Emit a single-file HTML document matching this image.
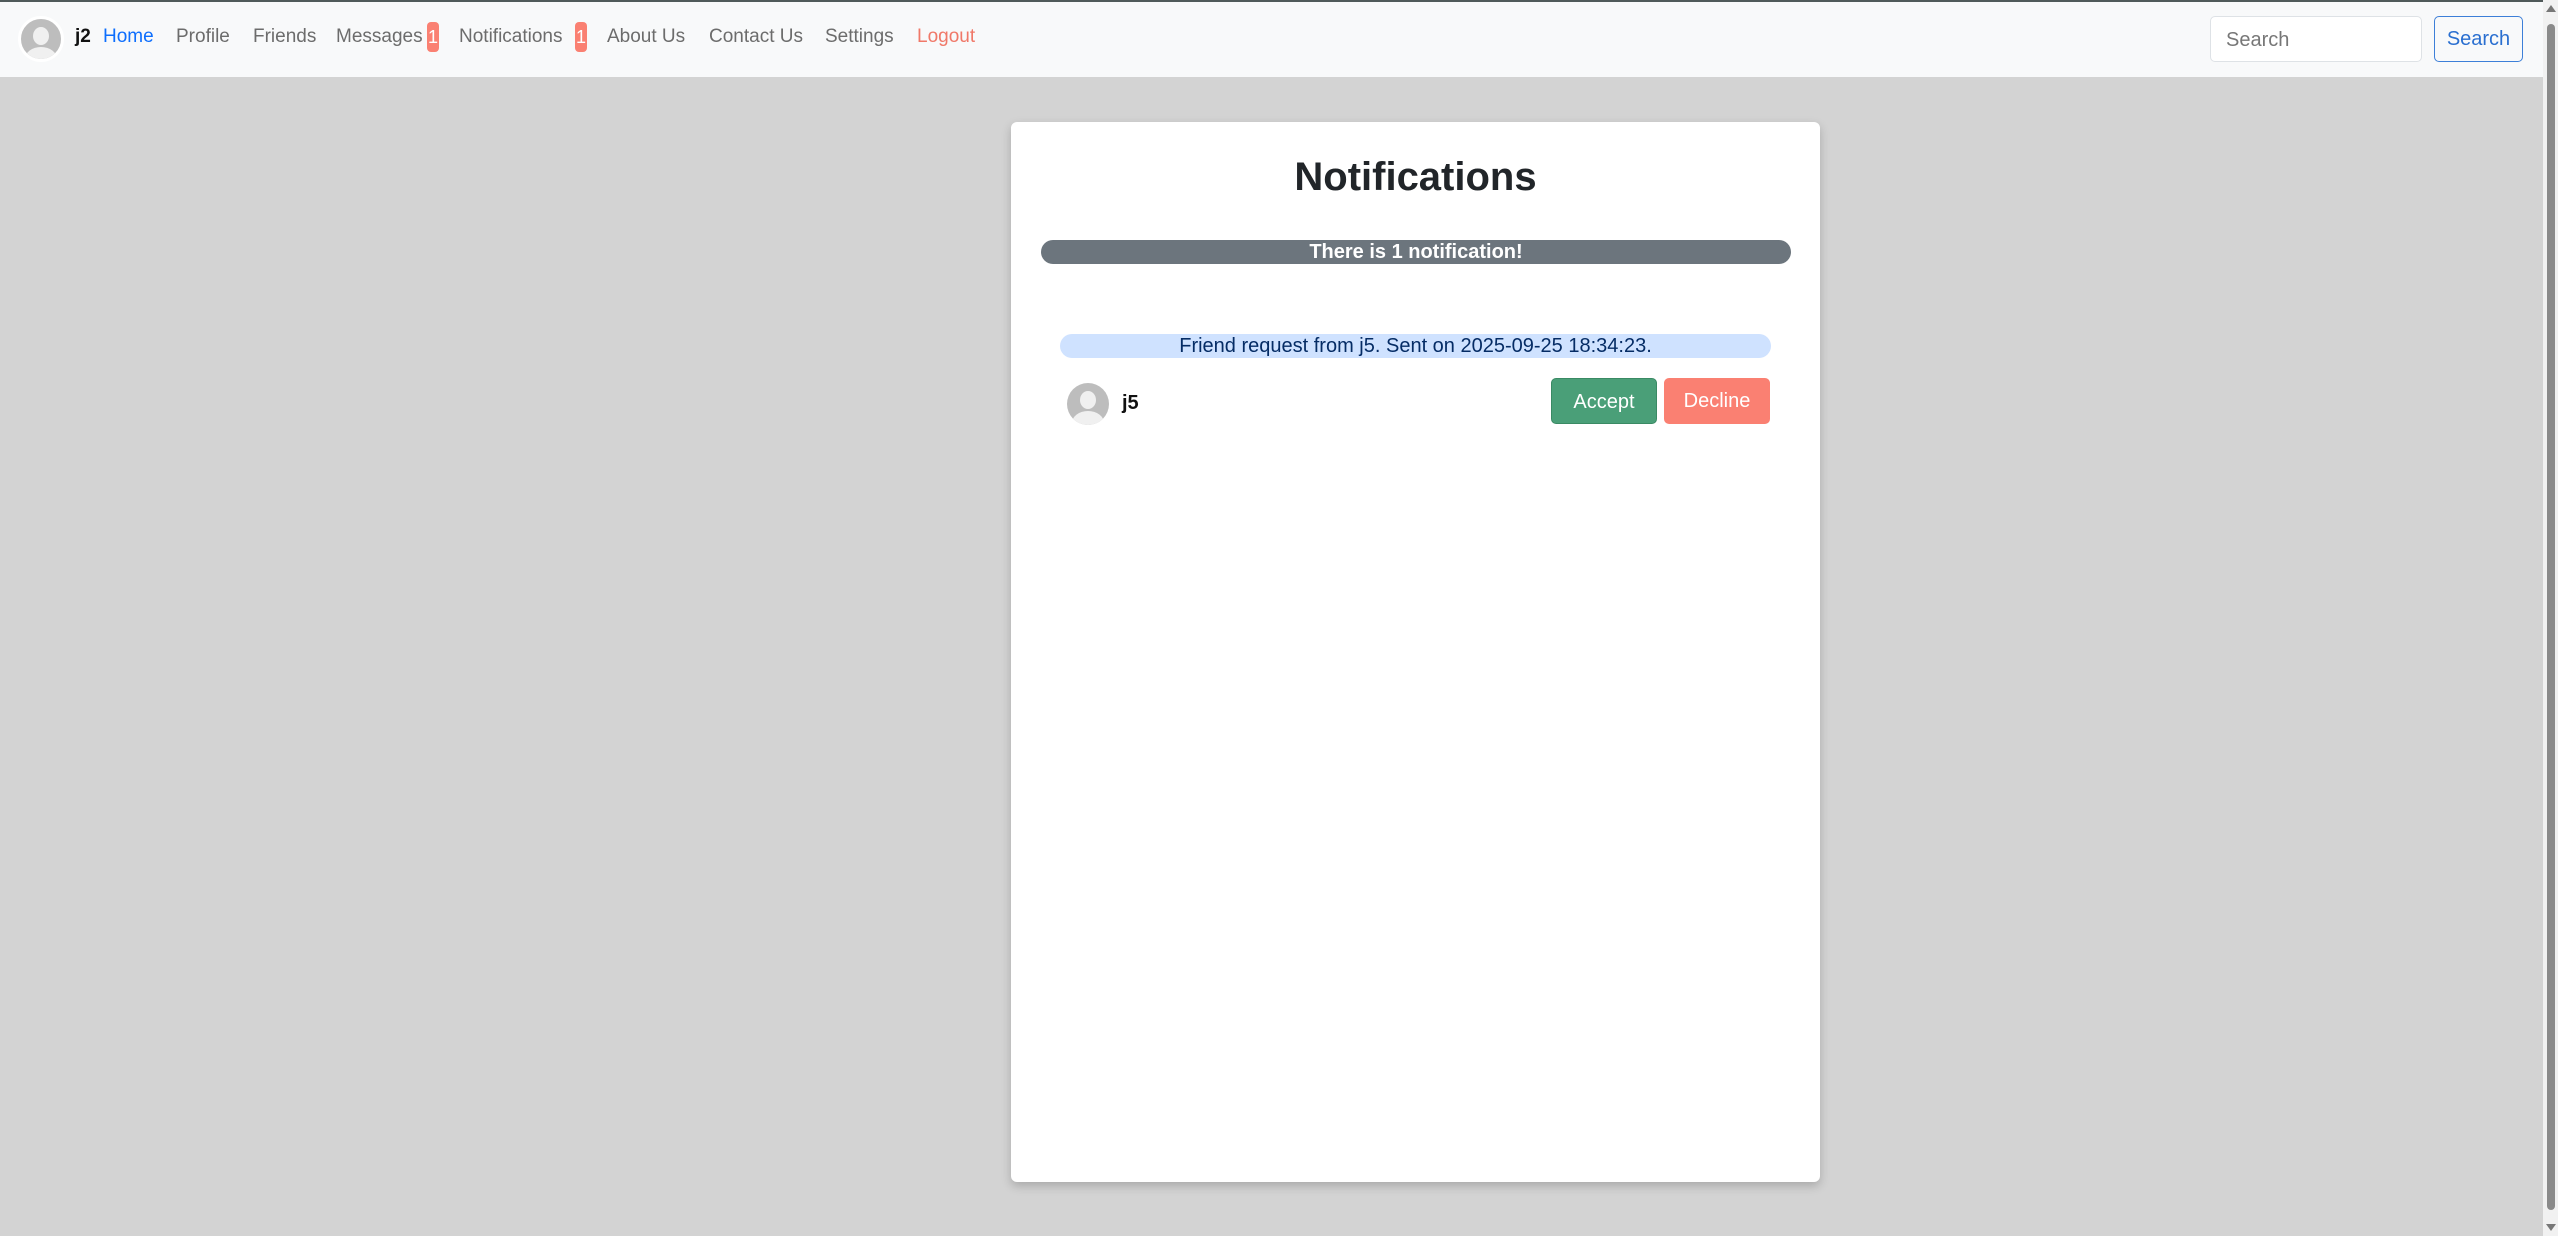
<!DOCTYPE html>
<html><head><meta charset="utf-8"><style>
*{box-sizing:border-box;margin:0;padding:0}
html,body{width:2558px;height:1236px;overflow:hidden}
body{background:#d3d3d3;font-family:"Liberation Sans",sans-serif;position:relative}
.topline{position:absolute;left:0;top:0;width:2543px;height:2px;background:#505a5a}
.nav{position:absolute;left:0;top:2px;width:2543px;height:75px;background:#f8f9fa}
.av{position:absolute;border-radius:50%;background:#bdbdbd;overflow:hidden}
.av .h{position:absolute;border-radius:50%;background:#f0f0f0}
.av .b{position:absolute;border-radius:50%;background:#f0f0f0}
.nav a{position:absolute;top:24px;font-size:19px;color:#6c6c6c;text-decoration:none;white-space:nowrap}
.badge{position:absolute;top:20px;width:12px;height:30px;background:#fa8072;color:#fff;border-radius:4px;font-size:18px;text-align:center;line-height:30px}
.inp{position:absolute;left:2210px;top:16px;width:212px;height:46px;border:1px solid #dee2e6;border-radius:5px;background:#fff;font-size:20px;color:#777;padding:12px 15px}
.sbtn{position:absolute;left:2434px;top:16px;width:89px;height:46px;border:1.5px solid #3d7fd8;border-radius:5px;color:#2a6fd0;font-size:20px;text-align:center;line-height:45px}
.scroll{position:absolute;right:0;top:0;width:15px;height:1236px;background:#f1f1f1}
.thumb{position:absolute;left:4px;top:24px;width:8px;height:1186px;background:#8a8a8a;border-radius:4px}
.card{position:absolute;left:1011px;top:122px;width:809px;height:1060px;background:#fff;border-radius:6px;box-shadow:0 4px 10px rgba(0,0,0,.2)}
h2{position:absolute;left:1011px;width:809px;top:155px;text-align:center;font-size:40px;font-weight:bold;color:#212529}
.bar{position:absolute;border-radius:13px;text-align:center;font-size:20px;font-weight:bold}
.btn{position:absolute;top:378px;height:46px;width:106px;border-radius:5px;color:#fff;font-size:20px;text-align:center;line-height:46px}
</style></head><body>
<div class="topline"></div>
<div class="nav">
 <div class="av" style="left:18px;top:14px;width:46px;height:46px;border:3px solid #fff;"><div class="h" style="left:12px;top:8px;width:16px;height:18px"></div><div class="b" style="left:4px;top:28px;width:32px;height:24px"></div></div>
 <a style="left:75px;color:#111;font-weight:bold">j2</a>
 <a style="left:103px;color:#0d6efd">Home</a>
 <a style="left:176px">Profile</a>
 <a style="left:253px">Friends</a>
 <a style="left:336px">Messages</a><div class="badge" style="left:427px">1</div>
 <a style="left:459px">Notifications</a><div class="badge" style="left:575px">1</div>
 <a style="left:607px">About Us</a>
 <a style="left:709px">Contact Us</a>
 <a style="left:825px">Settings</a>
 <a style="left:917px;color:#f07868">Logout</a>
</div>
<div class="inp">Search</div>
<div class="sbtn">Search</div>
<div class="scroll"><div class="thumb"></div>
<div style="position:absolute;left:3px;top:5px;border:5px solid transparent;border-bottom:7px solid #777;border-top:0"></div>
<div style="position:absolute;left:3px;bottom:5px;border:5px solid transparent;border-top:7px solid #777;border-bottom:0"></div></div>
<div class="card"></div>
<h2>Notifications</h2>
<div class="bar" style="left:1041px;top:240px;width:750px;height:24px;background:#6c757d;color:#fff;line-height:25px">There is 1 notification!</div>
<div class="bar" style="left:1060px;top:334px;width:711px;height:24px;background:#cfe2ff;color:#052c65;font-weight:normal;line-height:25px">Friend request from j5. Sent on 2025-09-25 18:34:23.</div>
<div class="av" style="left:1067px;top:383px;width:42px;height:42px"><div class="h" style="left:13px;top:8px;width:16px;height:18px"></div><div class="b" style="left:5px;top:28px;width:32px;height:24px"></div></div>
<div style="position:absolute;left:1122px;top:392px;font-size:20px;font-weight:bold;color:#111">j5</div>
<div class="btn" style="left:1551px;background:#4a9f78;border:1px solid #3a8a64">Accept</div>
<div class="btn" style="left:1664px;background:#fa8072">Decline</div>
</body></html>
